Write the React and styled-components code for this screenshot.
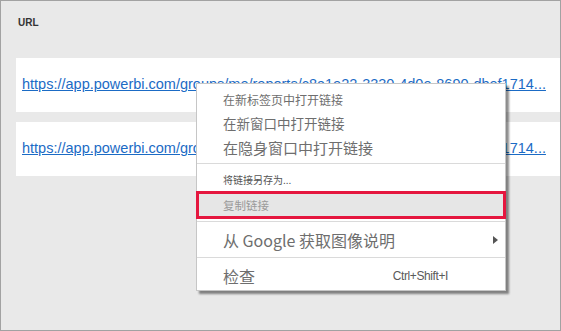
import React from "react";
import styled, { createGlobalStyle } from "styled-components";

const GlobalStyle = createGlobalStyle`
  html, body {
    margin: 0;
    padding: 0;
    background: #e9e9e9;
  }
  * {
    box-sizing: border-box;
  }
`;

const Frame = styled.div`
  position: relative;
  width: 561px;
  height: 331px;
  border: 1px solid #a2a2a2;
  background: #e9e9e9;
  padding: 0 0 0 15px;
  font-family: "Liberation Sans", "Noto Sans CJK SC", sans-serif;
  overflow: hidden;
`;

const Label = styled.div`
  height: 57px;
  padding: 16px 0 0 2px;
  font-size: 10px;
  font-weight: bold;
  color: #333;
`;

const Rows = styled.div`
  display: flex;
  flex-direction: column;
  gap: 10px;
`;

const Card = styled.div`
  display: flex;
  align-items: center;
  height: 54px;
  background: #fff;
  padding: 0 0 0 6px;
`;

const UrlLink = styled.a`
  display: block;
  font-size: 14.5px;
  color: #1b6bc5;
  text-decoration: underline;
  white-space: nowrap;
  padding-bottom: 2px;
`;

const Menu = styled.div`
  position: absolute;
  left: 195px;
  top: 82px;
  width: 310px;
  height: 208px;
  background: #fff;
  border: 1px solid #c6c6c6;
  box-shadow: 3px 3px 2px rgba(0, 0, 0, 0.45);
  padding-top: 4px;
  font-family: "Noto Sans CJK SC", "Liberation Sans", sans-serif;
  color: #6e6e6e;
`;

const Item = styled.div`
  display: flex;
  align-items: center;
  justify-content: space-between;
  height: ${(p) => p.$h}px;
  padding: ${(p) => p.$pt || 0}px 12px 0 26px;
  font-size: ${(p) => p.$size}px;
  color: ${(p) => p.$color || "#6e6e6e"};
  white-space: nowrap;
`;

const Selected = styled(Item)`
  margin: 0 -1px;
  background: #e6e6e6;
  border: 3px solid #e5173f;
  padding-left: 24px;
`;

const Separator = styled.div`
  height: 1px;
  background: #dadada;
  margin: ${(p) => p.$m || 4}px 0;
`;

const Shortcut = styled.span`
  font-family: "Liberation Sans", sans-serif;
  font-size: 12px;
  letter-spacing: -0.4px;
  color: #5a5a5a;
  margin-right: 45px;
`;

const Arrow = styled.span`
  width: 0;
  height: 0;
  border-top: 4px solid transparent;
  border-bottom: 4px solid transparent;
  border-left: 5px solid #555;
  margin-right: -5px;
`;

const url =
  "https://app.powerbi.com/groups/me/reports/c8a1e22-3330-4d0e-8690-dbef1714...";

export default function App() {
  return (
    <>
      <GlobalStyle />
      <Frame>
        <Label>URL</Label>
        <Rows>
          <Card>
            <UrlLink href="#">{url}</UrlLink>
          </Card>
          <Card>
            <UrlLink href="#">{url}</UrlLink>
          </Card>
        </Rows>
        <Menu>
          <Item $h={23} $size={12}>在新标签页中打开链接</Item>
          <Item $h={24} $size={13.5}>在新窗口中打开链接</Item>
          <Item $h={24} $size={15}>在隐身窗口中打开链接</Item>
          <Separator $m={4} />
          <Item $h={23} $size={10} $color="#555">将链接另存为...</Item>
          <Selected $h={28} $size={11.5} $color="#9a9a9a">复制链接</Selected>
          <Separator $m={2} />
          <Item $h={32} $size={16}>
            从 Google 获取图像说明
            <Arrow />
          </Item>
          <Separator $m={1} />
          <Item $h={31} $size={16} $pt={3}>
            检查
            <Shortcut>Ctrl+Shift+I</Shortcut>
          </Item>
        </Menu>
      </Frame>
    </>
  );
}
